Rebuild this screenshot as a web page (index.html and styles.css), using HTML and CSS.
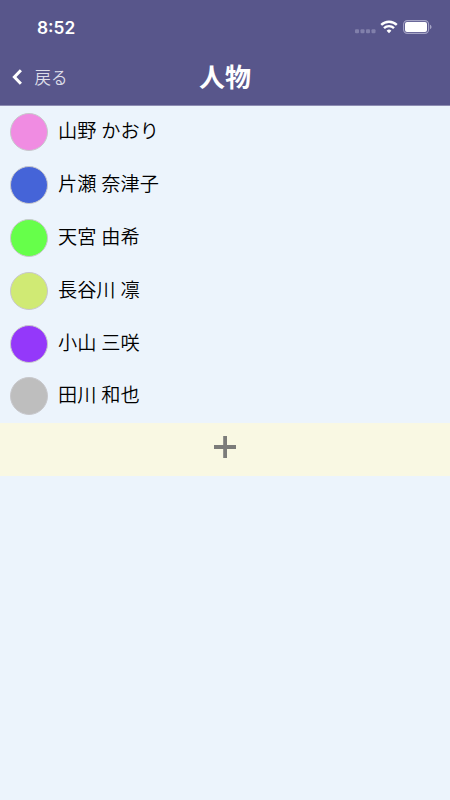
FILE: index.html
```html
<!DOCTYPE html>
<html lang="ja">
<head>
    <meta charset="UTF-8">
    <meta name="viewport" content="width=device-width, initial-scale=1.0">
    <title>人物</title>
    <link rel="stylesheet" href="styles.css">
</head>
<body>

<header class="header">
    <div class="status-bar">
        <span class="time">8:52</span>
        <div class="status-icons">
            <!-- 電波 -->
            <svg class="signal" width="21" height="5" viewBox="0 0 21 5" fill="#8180ab">
                <rect x="0" y="0.2" width="4" height="4" rx="1"/>
                <rect x="5.5" y="0.2" width="4" height="4" rx="1"/>
                <rect x="11" y="0.2" width="4" height="4" rx="1"/>
                <rect x="16.5" y="0.2" width="4" height="4" rx="1"/>
            </svg>
            <svg class="wifi" width="18" height="14" viewBox="0 0 18 14" fill="none" stroke="#fff" stroke-width="2.4">
                <path d="M1.2 4.9a11.2 11.2 0 0 1 15.6 0"/>
                <path d="M4 8.1a7.2 7.2 0 0 1 10 0"/>
                <path d="M9 13.2l-2.4-2.5a3.5 3.5 0 0 1 4.8 0z" fill="#fff" stroke="none"/>
            </svg>
            <svg class="battery" width="29" height="14" viewBox="0 0 29 14">
                <rect x="0.6" y="0.6" width="25" height="12.8" rx="3.8" fill="none" stroke="#a5a4c5" stroke-width="1.1"/>
                <rect x="2" y="2" width="22" height="10" rx="2" fill="#fff"/>
                <path d="M27 4.8c2 .7 2 3.7 0 4.4z" fill="#a5a4c5"/>
            </svg>
        </div>
    </div>
    <nav class="nav-bar">
        <a class="back" href="#">
            <svg width="10" height="16" viewBox="0 0 10 16" fill="none" stroke="#fff" stroke-width="3">
                <path d="M8.9 1.3L2.4 8l6.5 6.7"/>
            </svg>
            <span>戻る</span>
        </a>
        <h1 class="title">人物</h1>
    </nav>
</header>

<ul class="people">
    <li class="person"><span class="color pink"></span><span class="name">山野 かおり</span></li>
    <li class="person"><span class="color blue"></span><span class="name">片瀬 奈津子</span></li>
    <li class="person"><span class="color green"></span><span class="name">天宮 由希</span></li>
    <li class="person"><span class="color lime"></span><span class="name">長谷川 凛</span></li>
    <li class="person"><span class="color purple"></span><span class="name">小山 三咲</span></li>
    <li class="person"><span class="color gray"></span><span class="name">田川 和也</span></li>
</ul>

<button class="add" aria-label="追加">
    <svg width="24" height="24" viewBox="0 0 24 24" fill="#7c7c7a">
        <path d="M10.2 1h3.8v9.1h9v3.8h-9v9h-3.8v-9H1v-3.8h9.2z"/>
    </svg>
</button>

</body>
</html>
```
FILE: styles.css
```css
body {
    margin: 0;
    min-height: 100vh;
    background-color: #ecf4fc;
    color: #000;
    font-family: "Noto Sans CJK JP", sans-serif;
}

/* ヘッダー */
.header {
    height: 106px;
    box-sizing: border-box;
    background-color: #58568b;
    border-bottom: 1px solid #8d8cb2;
    color: #fff;
}

.status-bar {
    display: flex;
    justify-content: space-between;
    align-items: center;
    height: 54px;
    padding: 0 18px 0 37px;
    box-sizing: border-box;
}

.time {
    font-family: Inter, sans-serif;
    font-size: 17.3px;
    font-weight: 600;
}

.status-icons {
    display: flex;
    align-items: center;
}

.signal {
    margin-top: 8px;
}

.wifi {
    margin-left: 4px;
}

.battery {
    margin-left: 5px;
}

.nav-bar {
    display: grid;
    grid-template-columns: 1fr auto 1fr;
    align-items: center;
    height: 46px;
}

.back {
    display: flex;
    align-items: center;
    gap: 12.5px;
    padding-left: 12px;
    color: #dddde8;
    font-size: 16.5px;
    font-weight: 350;
    text-decoration: none;
}

.title {
    margin: 0;
    padding-bottom: 2px;
    font-size: 26px;
    font-weight: 700;
    line-height: 44px;
}

/* 人物一覧 */
.people {
    margin: 0;
    padding: 0;
    list-style: none;
}

.person {
    display: flex;
    align-items: center;
    gap: 10px;
    height: 52.8px;
    padding-left: 10px;
}

.name {
    padding-bottom: 4px;
    font-size: 19.2px;
    font-weight: 350;
    word-spacing: 0.7px;
}

.color {
    width: 38px;
    height: 38px;
    box-sizing: border-box;
    border: 1.5px solid #c8c8cc;
    border-radius: 50%;
}

.pink { background-color: #f08ce2; }
.blue { background-color: #4564d8; }
.green { background-color: #66ff4a; }
.lime { background-color: #d0ea74; }
.purple { background-color: #9438fa; }
.gray { background-color: #bebebe; }

/* 追加ボタン */
.add {
    display: flex;
    justify-content: center;
    align-items: center;
    width: 100%;
    height: 53px;
    padding: 0 0 5px;
    border: none;
    background-color: #f9f8e3;
}
```
